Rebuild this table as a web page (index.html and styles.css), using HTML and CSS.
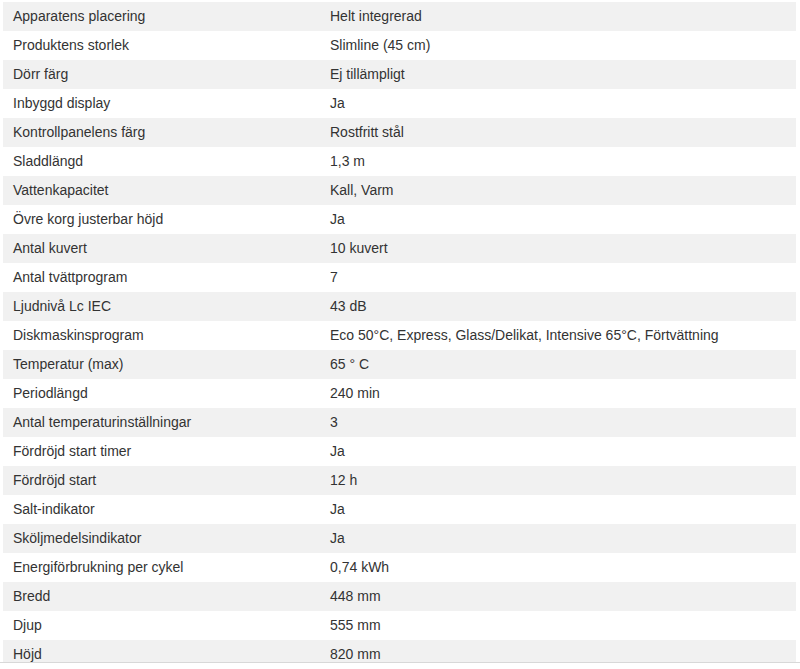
FILE: index.html
```html
<!DOCTYPE html>
<html lang="sv">
<head>
<meta charset="utf-8">
<title>Specifikationer</title>
<link rel="stylesheet" href="styles.css">
</head>
<body>
<div class="frame">
  <table class="specs">
    <tbody>
      <tr><td>Apparatens placering</td><td>Helt integrerad</td></tr>
      <tr><td>Produktens storlek</td><td>Slimline (45 cm)</td></tr>
      <tr><td>Dörr färg</td><td>Ej tillämpligt</td></tr>
      <tr><td>Inbyggd display</td><td>Ja</td></tr>
      <tr><td>Kontrollpanelens färg</td><td>Rostfritt stål</td></tr>
      <tr><td>Sladdlängd</td><td>1,3 m</td></tr>
      <tr><td>Vattenkapacitet</td><td>Kall, Varm</td></tr>
      <tr><td>Övre korg justerbar höjd</td><td>Ja</td></tr>
      <tr><td>Antal kuvert</td><td>10 kuvert</td></tr>
      <tr><td>Antal tvättprogram</td><td>7</td></tr>
      <tr><td>Ljudnivå Lc IEC</td><td>43 dB</td></tr>
      <tr><td>Diskmaskinsprogram</td><td>Eco 50°C, Express, Glass/Delikat, Intensive 65°C, Förtvättning</td></tr>
      <tr><td>Temperatur (max)</td><td>65 ° C</td></tr>
      <tr><td>Periodlängd</td><td>240 min</td></tr>
      <tr><td>Antal temperaturinställningar</td><td>3</td></tr>
      <tr><td>Fördröjd start timer</td><td>Ja</td></tr>
      <tr><td>Fördröjd start</td><td>12 h</td></tr>
      <tr><td>Salt-indikator</td><td>Ja</td></tr>
      <tr><td>Sköljmedelsindikator</td><td>Ja</td></tr>
      <tr><td>Energiförbrukning per cykel</td><td>0,74 kWh</td></tr>
      <tr><td>Bredd</td><td>448 mm</td></tr>
      <tr><td>Djup</td><td>555 mm</td></tr>
      <tr><td>Höjd</td><td>820 mm</td></tr>
    </tbody>
  </table>
</div>
</body>
</html>
```
FILE: styles.css
```css
html, body {
  margin: 0;
  padding: 0;
  background: #ffffff;
}

body {
  font-family: "Liberation Sans", Arial, sans-serif;
  font-size: 14px;
  color: #333333;
}

.frame {
  height: 660px;
  overflow: hidden;
  padding: 2px 4px 0 3px;
  border-bottom: 1px solid #d8d8d8;
}

.specs {
  width: 100%;
  border-collapse: collapse;
  border-spacing: 0;
}

.specs tr {
  height: 29px;
}

.specs tr:nth-child(odd) {
  background: #f1f1f1;
}

.specs td {
  box-sizing: border-box;
  padding: 0 10px 2px;
  height: 29px;
  line-height: 16px;
  vertical-align: middle;
  white-space: nowrap;
}

.specs td:first-child {
  width: 317px;
}
```
